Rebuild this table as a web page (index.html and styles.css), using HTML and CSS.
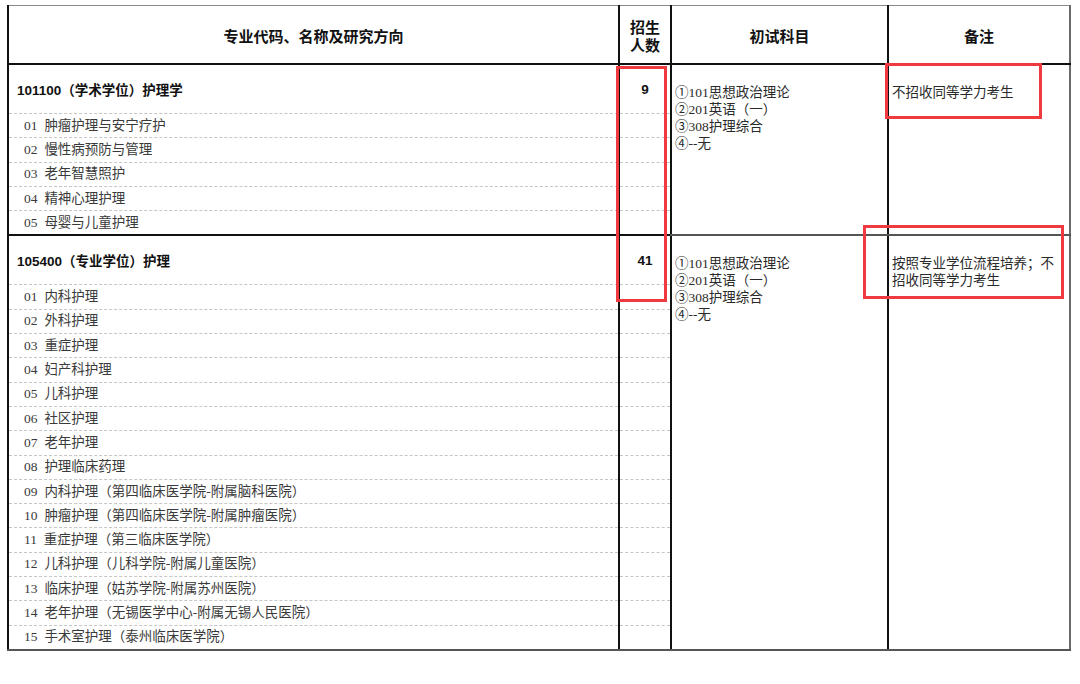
FILE: index.html
```html
<!DOCTYPE html>
<html lang="zh-CN">
<head>
<meta charset="utf-8">
<title>护理学招生目录</title>
<link rel="stylesheet" href="styles.css">
</head>
<body>
<div class="sheet">
  <table class="plan">
    <colgroup>
      <col class="c1"><col class="c2"><col class="c3"><col class="c4">
    </colgroup>
    <thead>
      <tr>
        <th>专业代码、名称及研究方向</th>
        <th>招生<br>人数</th>
        <th>初试科目</th>
        <th class="last">备注</th>
      </tr>
    </thead>
    <tbody class="sec">
      <tr class="major">
        <td class="name">101100（学术学位）护理学</td>
        <td class="num">9</td>
        <td class="subj" rowspan="6">①101思想政治理论<br>②201英语（一）<br>③308护理综合<br>④--无</td>
        <td class="note" rowspan="6">不招收同等学力考生</td>
      </tr>
      <tr class="dir"><td>01 肿瘤护理与安宁疗护</td><td></td></tr>
      <tr class="dir"><td>02 慢性病预防与管理</td><td></td></tr>
      <tr class="dir"><td>03 老年智慧照护</td><td></td></tr>
      <tr class="dir"><td>04 精神心理护理</td><td></td></tr>
      <tr class="dir"><td>05 母婴与儿童护理</td><td></td></tr>
    </tbody>
    <tbody class="sec">
      <tr class="major">
        <td class="name">105400（专业学位）护理</td>
        <td class="num">41</td>
        <td class="subj" rowspan="16">①101思想政治理论<br>②201英语（一）<br>③308护理综合<br>④--无</td>
        <td class="note" rowspan="16">按照专业学位流程培养；不<br>招收同等学力考生</td>
      </tr>
      <tr class="dir"><td>01 内科护理</td><td></td></tr>
      <tr class="dir"><td>02 外科护理</td><td></td></tr>
      <tr class="dir"><td>03 重症护理</td><td></td></tr>
      <tr class="dir"><td>04 妇产科护理</td><td></td></tr>
      <tr class="dir"><td>05 儿科护理</td><td></td></tr>
      <tr class="dir"><td>06 社区护理</td><td></td></tr>
      <tr class="dir"><td>07 老年护理</td><td></td></tr>
      <tr class="dir"><td>08 护理临床药理</td><td></td></tr>
      <tr class="dir"><td>09 内科护理（第四临床医学院-附属脑科医院）</td><td></td></tr>
      <tr class="dir"><td>10 肿瘤护理（第四临床医学院-附属肿瘤医院）</td><td></td></tr>
      <tr class="dir"><td>11 重症护理（第三临床医学院）</td><td></td></tr>
      <tr class="dir"><td>12 儿科护理（儿科学院-附属儿童医院）</td><td></td></tr>
      <tr class="dir"><td>13 临床护理（姑苏学院-附属苏州医院）</td><td></td></tr>
      <tr class="dir"><td>14 老年护理（无锡医学中心-附属无锡人民医院）</td><td></td></tr>
      <tr class="dir end"><td>15 手术室护理（泰州临床医学院）</td><td></td></tr>
    </tbody>
  </table>
  <div class="mark mark-count"></div>
  <div class="mark mark-note1"></div>
  <div class="mark mark-note2"></div>
</div>
</body>
</html>
```

FILE: styles.css
```css
html, body {
  margin: 0;
  padding: 0;
  background: #ffffff;
}

.sheet {
  position: relative;
  width: 1080px;
  height: 684px;
  box-sizing: border-box;
  padding: 5px 0 0 7px;
}

.plan {
  border-collapse: collapse;
  table-layout: fixed;
  width: 1062px;
}

.c1 { width: 611px; }
.c2 { width: 52px; }
.c3 { width: 217px; }
.c4 { width: 182px; }

.plan th {
  height: 53px;
  padding: 4px 0 0 0;
  border: 2px solid #111111;
  border-top: 1px solid #8a8a8a;
  font-family: "Liberation Sans", "Noto Sans CJK SC", sans-serif;
  font-weight: 700;
  font-size: 15px;
  line-height: 18px;
  color: #111111;
  text-align: center;
  vertical-align: middle;
}

.plan th.last {
  border-right-color: #6a6a6a;
}

.plan td {
  padding: 0;
  border-left: 2px solid #111111;
  border-right: 2px solid #111111;
}

.major td {
  height: 48px;
  border-top: 2px solid #111111;
  vertical-align: middle;
}

.major .name {
  padding-left: 8px;
  font-family: "Liberation Sans", "Noto Sans CJK SC", sans-serif;
  font-weight: 700;
  font-size: 13.5px;
  color: #111111;
}

.major .num {
  text-align: center;
  font-family: "Liberation Sans", "Noto Sans CJK SC", sans-serif;
  font-weight: 700;
  font-size: 13.5px;
  color: #111111;
}

.plan td.subj,
.plan td.note {
  vertical-align: top;
  padding: 19px 0 0 3px;
  font-family: "Liberation Serif", "Noto Sans CJK SC", serif;
  font-size: 13.5px;
  line-height: 17px;
  color: #2a2a2a;
  border-bottom: 2px solid #555555;
}

.plan td.note {
  border-right: 2px solid #6a6a6a;
}

.dir td {
  height: 23.3px;
  border-top: 1px dashed #c6c6c6;
  vertical-align: middle;
  font-family: "Liberation Serif", "Noto Sans CJK SC", serif;
  font-size: 13.5px;
  line-height: 16px;
  word-spacing: 3.5px;
  color: #3a3a3a;
}

.dir td:first-child {
  padding-left: 15px;
}

.dir.end td {
  border-bottom: 2px solid #555555;
}

.mark {
  position: absolute;
  box-sizing: border-box;
  border: 3px solid #ef3b40;
}

.mark-count {
  left: 616px;
  top: 66px;
  width: 51px;
  height: 236px;
}

.mark-note1 {
  left: 885px;
  top: 63px;
  width: 157px;
  height: 56px;
}

.mark-note2 {
  left: 863px;
  top: 225px;
  width: 201px;
  height: 74px;
}
```
